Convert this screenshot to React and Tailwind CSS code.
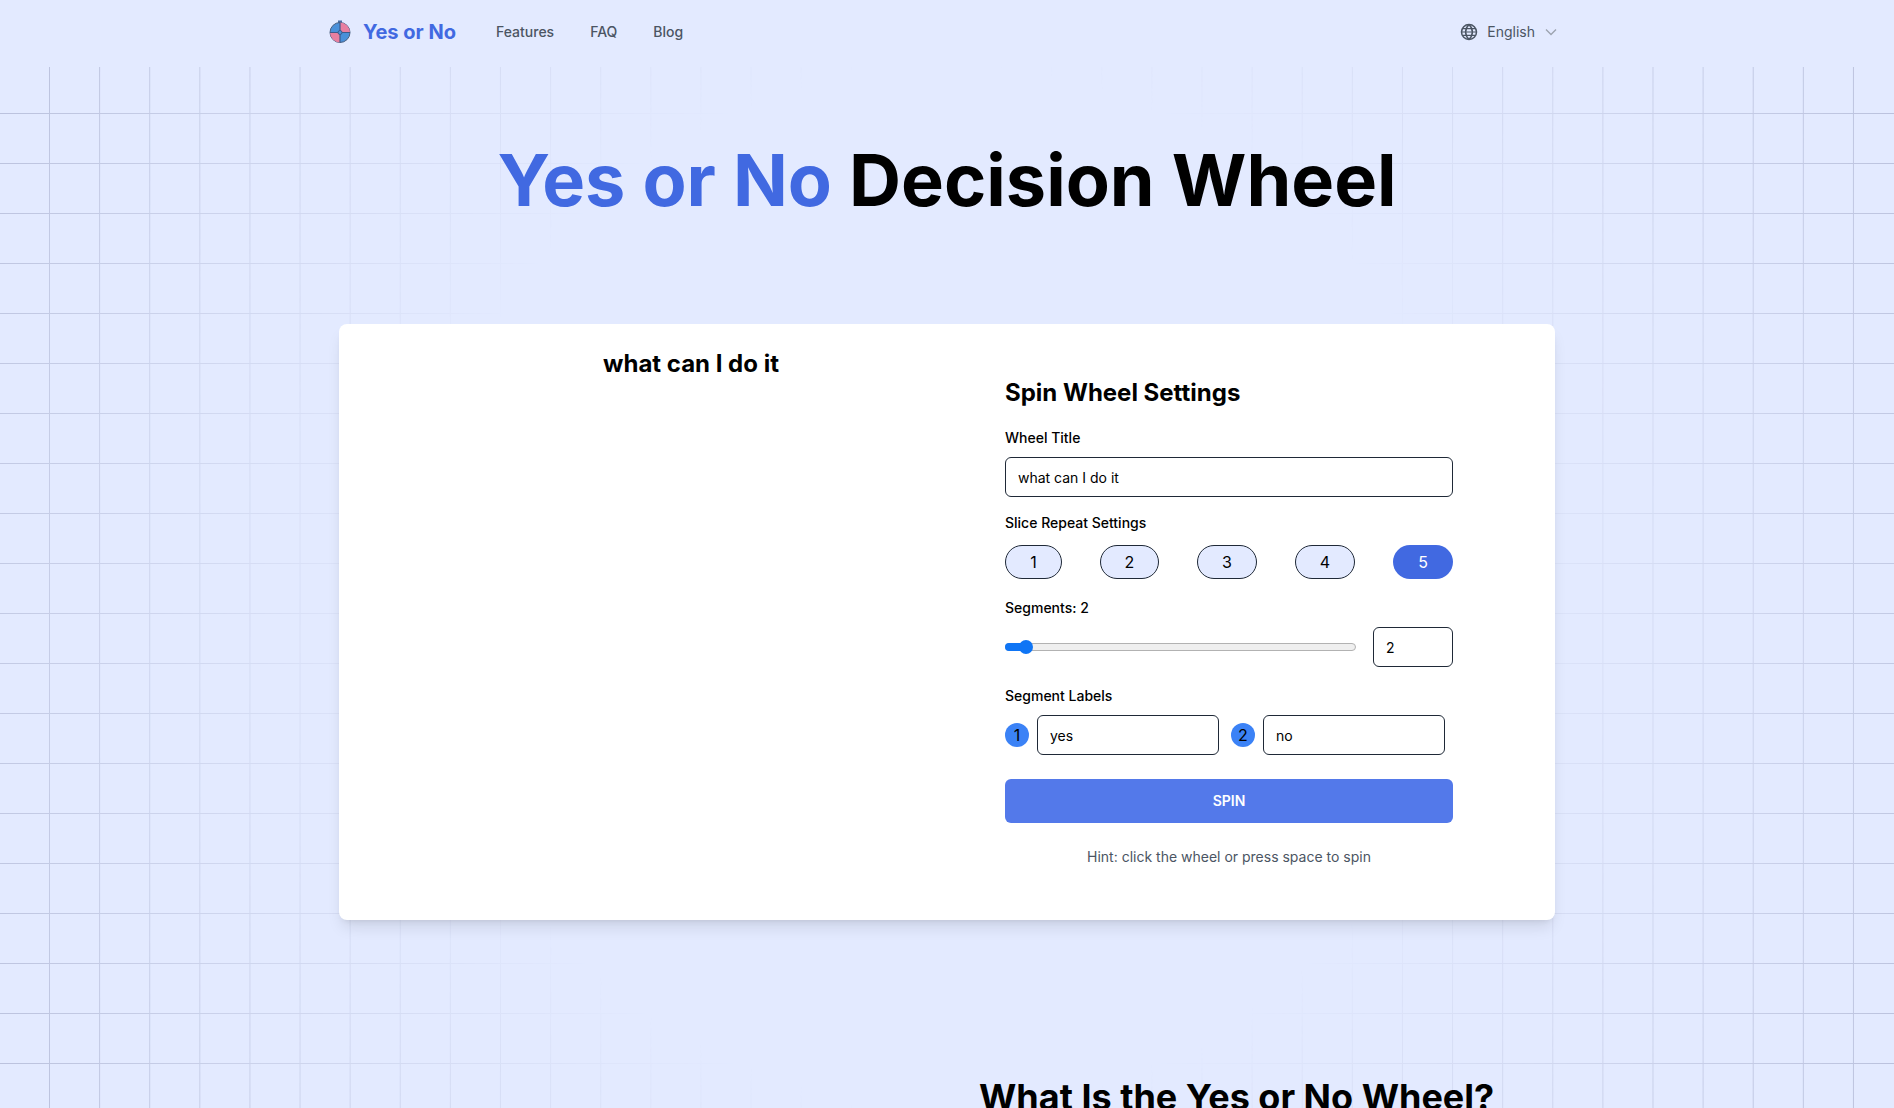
const SLICES = [
  { n: 1, w: "w-[57px]" },
  { n: 2, w: "w-[59px]" },
  { n: 3, w: "w-[60px]" },
  { n: 4, w: "w-[60px]" },
  { n: 5, w: "w-[60px]", active: true },
];

function Logo() {
  return (
    <svg viewBox="0 0 24 24" className="w-[24px] h-[24px]">
      <rect x="10" y="0.5" width="4" height="3" fill="#4a6fa5" />
      <circle cx="12" cy="12.5" r="10" fill="#4a90d9" stroke="#4a5f80" strokeWidth="1" />
      <path d="M12 12.5 L12 2.5 A10 10 0 0 1 22 12.5 Z" fill="#e87fa0" />
      <path d="M12 12.5 L12 22.5 A10 10 0 0 1 2 12.5 Z" fill="#e87fa0" />
      <path d="M12 2.5 V22.5 M2 12.5 H22" stroke="#3f5a8a" strokeWidth="1.2" />
      <circle cx="12" cy="12.5" r="2" fill="#4a90d9" stroke="#3f5a8a" strokeWidth="1" />
    </svg>
  );
}

function Globe() {
  return (
    <svg viewBox="0 0 24 24" fill="none" stroke="#4b5563" strokeWidth="2" className="w-[18px] h-[18px]">
      <circle cx="12" cy="12" r="10" />
      <path d="M2 12h20M3.5 7.5h17M3.5 16.5h17" strokeWidth="1.6" />
      <path d="M12 2c-6 6-6 14 0 20M12 2c6 6 6 14 0 20" />
    </svg>
  );
}

function TextBox({ value, className }) {
  return (
    <input
      readOnly
      value={value}
      className={`h-[40px] px-3 bg-white border border-[#1f2937] rounded-md text-sm text-black outline-none ${className}`}
    />
  );
}

function Label({ children, className = "" }) {
  return <p className={`text-sm font-medium text-black leading-5 ${className}`}>{children}</p>;
}

export default function App() {
  return (
    <div className="relative h-[1108px] overflow-hidden bg-[#e3eaff] font-['Inter',sans-serif]">
      {/* grid lines, fading toward the middle */}
      <div className="absolute inset-x-0 top-[67px] bottom-0 bg-[linear-gradient(to_right,#b9c0dc_1px,transparent_1px),linear-gradient(to_bottom,#b9c0dc_1px,transparent_1px)] bg-[size:50.11px_50px] bg-[position:-1.11px_-4px] [mask-image:radial-gradient(circle_at_center,transparent_48%,black_100%)]" />

      <header className="relative h-[67px] w-[1280px] mx-auto pl-[21px] pb-[3px] flex items-center">
        <Logo />
        <span className="ml-[11px] w-[93px] whitespace-nowrap text-xl font-bold text-[#4169e1]">Yes or No</span>
        <nav className="ml-10 flex items-center gap-9 text-sm font-medium text-[#4b5563]">
          <span>Features</span>
          <span>FAQ</span>
          <span>Blog</span>
        </nav>
        <div className="ml-auto pr-[26px] flex items-center text-sm text-[#4b5563]">
          <Globe />
          <span className="ml-[9px]">English</span>
          <svg viewBox="0 0 24 24" fill="none" stroke="#9ca3af" strokeWidth="1.6" className="ml-[6px] w-[20px] h-[20px]">
            <path d="M6 9l6 6 6-6" />
          </svg>
        </div>
      </header>

      <main className="relative w-[1280px] mx-auto px-8">
        <h1 className="mt-[77px] text-center text-[72px] leading-[72px] font-bold text-black">
          <span className="text-[#4169e1]">Yes or No</span> Decision Wheel
        </h1>

        <section className="mt-[108px] h-[596px] bg-white rounded-lg shadow-lg flex">
          <div className="ml-12 w-[608px] pt-[24px] text-center">
            <h2 className="text-2xl font-bold text-black">what can I do it</h2>
          </div>
          <div className="ml-[10px] w-[448px] pt-[53px]">
            <h2 className="text-2xl font-bold text-black leading-8">Spin Wheel Settings</h2>

            <Label className="mt-[19px]">Wheel Title</Label>
            <TextBox value="what can I do it" className="mt-[9px] w-full block" />

            <Label className="mt-[16px]">Slice Repeat Settings</Label>
            <div className="mt-[12px] flex justify-between">
              {SLICES.map((s) => (
                <button
                  key={s.n}
                  className={`${s.w} h-[34px] rounded-full text-base ${
                    s.active ? "bg-[#4169e1] text-white" : "bg-[#e3eaff] border border-[#1f2937] text-black"
                  }`}
                >
                  {s.n}
                </button>
              ))}
            </div>

            <Label className="mt-[19px]">Segments: 2</Label>
            <div className="mt-[9px] flex items-center justify-between">
              <div className="relative w-[351px] h-[8px] bg-[#efefef] border border-[#b2b2b2] rounded-full">
                <div className="absolute -left-px -top-px h-[8px] w-[20px] bg-[#0f75f5] rounded-full" />
                <div className="absolute left-[13px] top-[-4px] w-[14px] h-[14px] bg-[#0f75f5] rounded-full" />
              </div>
              <TextBox value="2" className="w-[80px]" />
            </div>

            <Label className="mt-[19px]">Segment Labels</Label>
            <div className="mt-[9px] flex items-center">
              <span className="w-6 h-6 rounded-full bg-[#3b82f6] text-black text-base flex items-center justify-center">1</span>
              <TextBox value="yes" className="ml-2 w-[182px]" />
              <span className="ml-3 w-6 h-6 rounded-full bg-[#3b82f6] text-black text-base flex items-center justify-center">2</span>
              <TextBox value="no" className="ml-2 w-[182px]" />
            </div>

            <button className="mt-6 w-full h-[44px] bg-[#5379ea] rounded-md text-sm font-semibold text-white">SPIN</button>
            <p className="mt-[24px] text-center text-sm leading-5 text-[#4b5563]">Hint: click the wheel or press space to spin</p>
          </div>
        </section>

        <h2 className="mt-[157px] ml-[640px] text-[36px] leading-10 font-bold text-black whitespace-nowrap">What Is the Yes or No Wheel?</h2>
      </main>
    </div>
  );
}
